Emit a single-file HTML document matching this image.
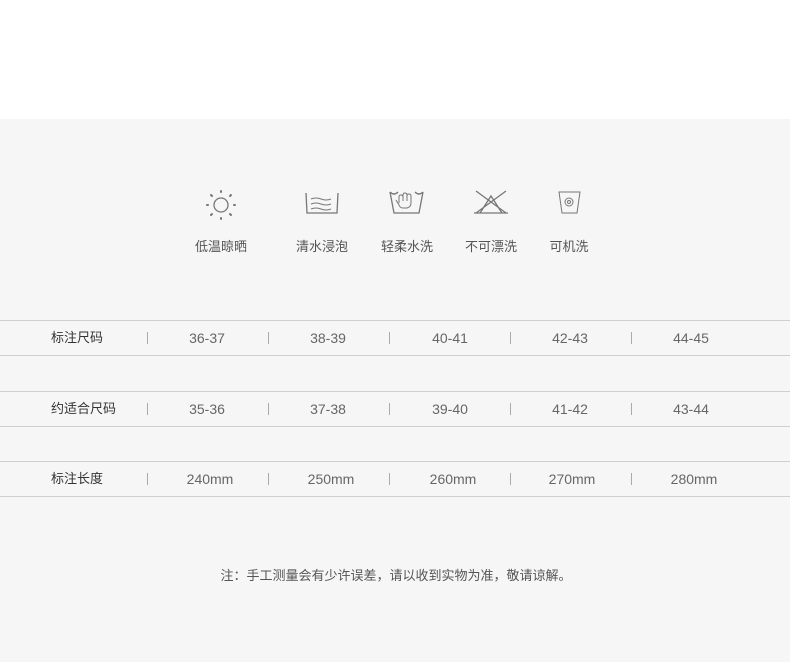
<!DOCTYPE html>
<html><head><meta charset="utf-8"><style>
body{margin:0;width:790px;height:662px;background:#fff;position:relative;overflow:hidden;font-family:"Liberation Sans","Noto Sans CJK SC",sans-serif}
.bg{position:absolute;left:0;top:119px;width:790px;height:543px;background:#f6f6f6}
.a{position:absolute;white-space:nowrap}
.lab{font-size:13px;color:#555;transform:translateX(-50%);top:236px}
.hl{position:absolute;left:0;width:790px;height:1px;background:#cfcfcf}
.rl{font-size:13px;color:#333;left:51px}
.v{font-size:14px;color:#666;transform:translateX(-50%)}
.sep{position:absolute;width:1px;height:12px;background:#aaa}
svg{position:absolute}
</style></head><body>
<div class="bg"></div>
<svg width="790" height="300" style="left:0;top:0" fill="none" stroke="#777" stroke-width="1.3">
<circle cx="221" cy="205" r="7"/>
<g stroke-width="2" stroke-linecap="round">
<line x1="221" y1="191" x2="221" y2="192"/><line x1="221" y1="218" x2="221" y2="219"/>
<line x1="207" y1="205" x2="208" y2="205"/><line x1="234" y1="205" x2="235" y2="205"/>
<line x1="211" y1="195" x2="212" y2="196"/><line x1="230" y1="214" x2="231" y2="215"/>
<line x1="231" y1="195" x2="230" y2="196"/><line x1="211" y1="215" x2="212" y2="214"/></g>
<path d="M306 193 L307 213 L337 213 L338 193"/>
<path d="M311 199 q5-2 10 0 t10 0 M311 204 q5-2 10 0 t10 0 M311 209 q5-2 10 0 t10 0" stroke-width="1"/>
<path d="M390 192 L394 213 L419 213 L423 192 M390 192 q4 4 8 0 M415 192 q4 4 8 0"/>
<path d="M399 203 v-6 q0-2 2-2 q2 0 2 2 v4 M403 200 v-5 q0-2 2-2 q2 0 2 2 v6 M407 200 v-4 q0-2 2-2 q2 0 2 2 v7 q0 4-4 5 h-4 q-3 0-4-3 l-3-5" stroke-width="1"/>
<path d="M476 191 L506 213 M506 191 L476 213 M480 213 L491 196 L502 213 M474 213 H508"/>
<path d="M559 192 H580 L577 213 H562 Z" stroke-width="1"/>
<circle cx="569" cy="202" r="4" stroke-width="1"/><circle cx="569" cy="202" r="1.5" stroke-width="1"/>
</svg>
<div class="a lab" style="left:221px">低温晾晒</div>
<div class="a lab" style="left:322px">清水浸泡</div>
<div class="a lab" style="left:407px">轻柔水洗</div>
<div class="a lab" style="left:491px">不可漂洗</div>
<div class="a lab" style="left:569px">可机洗</div>

<div class="hl" style="top:320px"></div><div class="hl" style="top:355px"></div>
<div class="hl" style="top:391px"></div><div class="hl" style="top:426px"></div>
<div class="hl" style="top:461px"></div><div class="hl" style="top:496px"></div>

<div class="a rl" style="top:327px">标注尺码</div>
<div class="a rl" style="top:398px">约适合尺码</div>
<div class="a rl" style="top:468px">标注长度</div>

<div class="sep" style="left:147px;top:332px"></div><div class="sep" style="left:268px;top:332px"></div><div class="sep" style="left:389px;top:332px"></div><div class="sep" style="left:510px;top:332px"></div><div class="sep" style="left:631px;top:332px"></div>
<div class="sep" style="left:147px;top:403px"></div><div class="sep" style="left:268px;top:403px"></div><div class="sep" style="left:389px;top:403px"></div><div class="sep" style="left:510px;top:403px"></div><div class="sep" style="left:631px;top:403px"></div>
<div class="sep" style="left:147px;top:473px"></div><div class="sep" style="left:268px;top:473px"></div><div class="sep" style="left:389px;top:473px"></div><div class="sep" style="left:510px;top:473px"></div><div class="sep" style="left:631px;top:473px"></div>

<div class="a v" style="left:207px;top:330px">36-37</div><div class="a v" style="left:328px;top:330px">38-39</div><div class="a v" style="left:450px;top:330px">40-41</div><div class="a v" style="left:570px;top:330px">42-43</div><div class="a v" style="left:691px;top:330px">44-45</div>
<div class="a v" style="left:207px;top:401px">35-36</div><div class="a v" style="left:328px;top:401px">37-38</div><div class="a v" style="left:450px;top:401px">39-40</div><div class="a v" style="left:570px;top:401px">41-42</div><div class="a v" style="left:691px;top:401px">43-44</div>
<div class="a v" style="left:210px;top:471px">240mm</div><div class="a v" style="left:331px;top:471px">250mm</div><div class="a v" style="left:453px;top:471px">260mm</div><div class="a v" style="left:572px;top:471px">270mm</div><div class="a v" style="left:694px;top:471px">280mm</div>

<div class="a" style="left:396px;top:565px;transform:translateX(-50%);font-size:13px;color:#555">注：手工测量会有少许误差，请以收到实物为准，敬请谅解。</div>
</body></html>
